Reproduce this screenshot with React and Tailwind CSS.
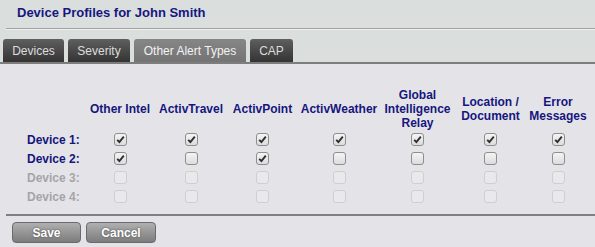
import React, { useState } from "react";

const columns = [
  { key: "intel", label: ["Other Intel"] },
  { key: "travel", label: ["ActivTravel"] },
  { key: "point", label: ["ActivPoint"] },
  { key: "weather", label: ["ActivWeather"] },
  { key: "gir", label: ["Global", "Intelligence", "Relay"] },
  { key: "location", label: ["Location /", "Document"] },
  { key: "error", label: ["Error", "Messages"] },
];

const initialDevices = [
  { name: "Device 1:", enabled: true, checks: [true, true, true, true, true, true, true] },
  { name: "Device 2:", enabled: true, checks: [true, false, true, false, false, false, false] },
  { name: "Device 3:", enabled: false, checks: [false, false, false, false, false, false, false] },
  { name: "Device 4:", enabled: false, checks: [false, false, false, false, false, false, false] },
];

const tabs = ["Devices", "Severity", "Other Alert Types", "CAP"];
const tabWidths = ["w-[61px]", "w-[62px]", "w-[112px]", "w-[43px]"];

const CheckBox = ({ checked, disabled, onToggle }) => {
  return (
    <button
      type="button"
      disabled={disabled}
      onClick={onToggle}
      className={
        disabled
          ? "w-[13px] h-[13px] rounded-[3px] border border-[#cfcfd2] bg-[#e9e9ec]"
          : "w-[13px] h-[13px] rounded-[3px] border border-[#8e8e8e] bg-gradient-to-b from-[#f4f4f4] to-[#dcdcdc] flex items-center justify-center"
      }
    >
      {checked && !disabled && (
        <svg width="11" height="11" viewBox="0 0 11 11">
          <path d="M2.2 5.8 L4.4 8 L8.8 2.6" fill="none" stroke="#2e2e2e" strokeWidth="1.9" />
        </svg>
      )}
    </button>
  );
};

const App = () => {
  const [activeTab, setActiveTab] = useState(2);
  const [devices, setDevices] = useState(initialDevices);

  const toggle = (row, col) => {
    setDevices((prev) =>
      prev.map((d, i) =>
        i === row ? { ...d, checks: d.checks.map((c, j) => (j === col ? !c : c)) } : d
      )
    );
  };

  return (
    <div className="w-[595px] h-[247px] overflow-hidden bg-[#e4e4e8] font-['Liberation_Sans',Arial,sans-serif]">
      {/* header + tabs */}
      <div className="bg-[#dadfde]">
        <div className="h-[28px] pl-[17px] pt-[5px] text-[13px] font-bold text-[#16167e] leading-[16px]">
          Device Profiles for John Smith
        </div>
        <div className="ml-[6px] border-t border-[#a2a2a2] border-b border-b-[#eef0ef]" />
        <div className="flex gap-[4px] pl-[3px] pt-[9px] border-b-2 border-[#7d7d7d]">
          {tabs.map((t, i) => (
            <div
              key={t}
              onClick={() => setActiveTab(i)}
              className={
                i === activeTab
                  ? `${tabWidths[i]} h-[23px] rounded-t-[3px] bg-gradient-to-b from-[#868686] to-[#747474] text-[#f2f2f2] text-[12px] flex items-center justify-center cursor-pointer`
                  : `${tabWidths[i]} h-[23px] rounded-t-[3px] bg-gradient-to-b from-[#5f5f5f] to-[#343434] text-[#dcdcdc] text-[12px] flex items-center justify-center cursor-pointer`
              }
            >
              {t}
            </div>
          ))}
        </div>
      </div>

      {/* grid */}
      <div className="pt-[24px] pl-[22px]">
        <div className="grid grid-cols-[63px_70px_72px_71px_82px_75px_71px_64px]">
          <div className="h-[42px]" />
          {columns.map((c) => (
            <div
              key={c.key}
              className="h-[42px] flex flex-col items-center justify-center text-center text-[12px] leading-[14px] font-bold text-[#16167e]"
            >
              {c.label.map((l) => (
                <span key={l}>{l}</span>
              ))}
            </div>
          ))}
          {devices.map((d, r) => (
            <React.Fragment key={d.name}>
              <div
                className={
                  d.enabled
                    ? "h-[19px] pl-[5px] flex items-center text-[12px] font-bold text-[#16167e]"
                    : "h-[19px] pl-[5px] flex items-center text-[12px] font-bold text-[#a4a4a8]"
                }
              >
                {d.name}
              </div>
              {d.checks.map((c, j) => (
                <div key={j} className="h-[19px] flex items-center justify-center">
                  <CheckBox checked={c} disabled={!d.enabled} onToggle={() => toggle(r, j)} />
                </div>
              ))}
            </React.Fragment>
          ))}
        </div>
      </div>

      {/* footer */}
      <div className="mt-[8px] ml-[6px] border-t-2 border-[#808080]" />
      <div className="flex gap-[5px] pl-[12px] pt-[6px]">
        <button className="w-[69px] h-[21px] rounded-[4px] border border-[#6a6a6a] bg-gradient-to-b from-[#b0b0b0] to-[#7c7c7c] text-white text-[12px] font-bold [text-shadow:0_0_2px_#444]">
          Save
        </button>
        <button className="w-[70px] h-[21px] rounded-[4px] border border-[#6a6a6a] bg-gradient-to-b from-[#b0b0b0] to-[#7c7c7c] text-white text-[12px] font-bold [text-shadow:0_0_2px_#444]">
          Cancel
        </button>
      </div>
    </div>
  );
};

export default App;
